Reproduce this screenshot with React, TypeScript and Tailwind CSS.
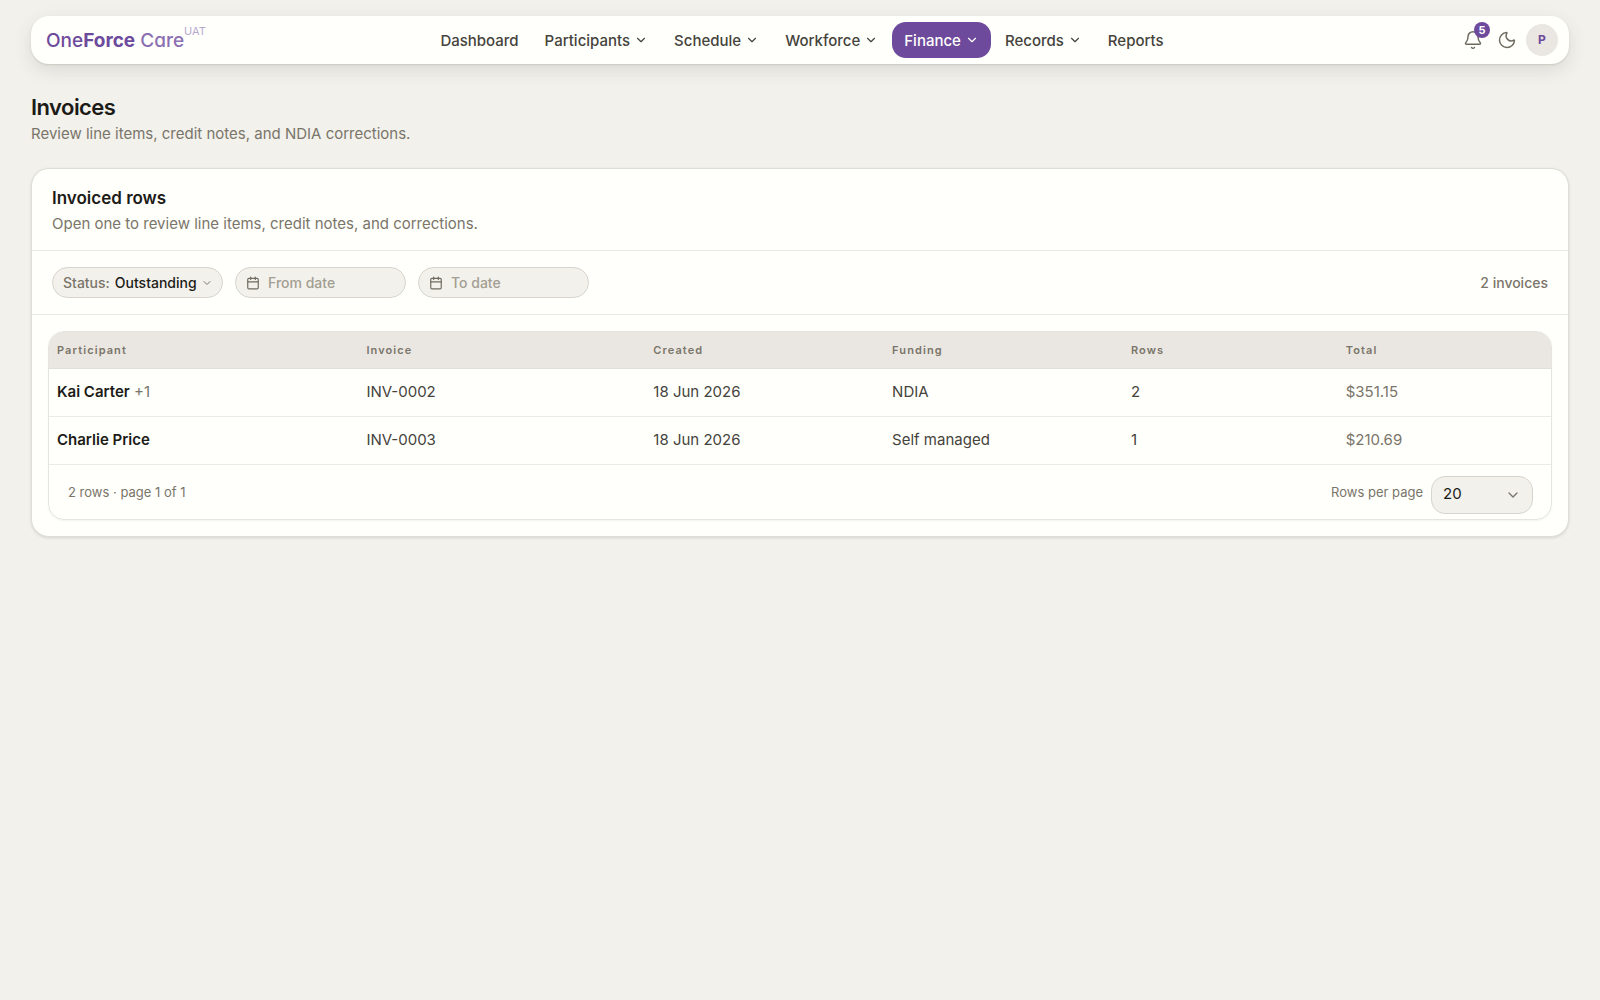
import { useState } from "react";
import { Bell, Calendar, ChevronDown, Moon } from "lucide-react";
import clsx from "clsx";

interface NavItem {
    label: string;
    hasMenu?: boolean;
    active?: boolean;
}

interface Invoice {
    id: string;
    participant: string;
    extra?: string;
    created: string;
    funding: string;
    rows: number;
    total: string;
}

const navItems: NavItem[] = [
    { label: "Dashboard" },
    { label: "Participants", hasMenu: true },
    { label: "Schedule", hasMenu: true },
    { label: "Workforce", hasMenu: true },
    { label: "Finance", hasMenu: true, active: true },
    { label: "Records", hasMenu: true },
    { label: "Reports" },
];

const columns = [
    { label: "Participant", width: "w-[20.6%]" },
    { label: "Invoice", width: "w-[19.1%]" },
    { label: "Created", width: "w-[15.9%]" },
    { label: "Funding", width: "w-[15.9%]" },
    { label: "Rows", width: "w-[14.3%]" },
    { label: "Total", width: "w-[14.2%]" },
];

const invoices: Invoice[] = [
    { id: "INV-0002", participant: "Kai Carter", extra: "+1", created: "18 Jun 2026", funding: "NDIA", rows: 2, total: "$351.15" },
    { id: "INV-0003", participant: "Charlie Price", created: "18 Jun 2026", funding: "Self managed", rows: 1, total: "$210.69" },
];

/* ── Top bar ──────────────────────────────────────────── */
function TopBar() {
    const itemClass = "flex h-9 items-center gap-1 rounded-[14px] px-3 pt-[2px] text-[15px] font-medium";

    return (
        <header className="grid grid-cols-[1fr_auto_1fr] items-center rounded-[18px] bg-[#fffffb] py-[6px] pr-[11px] pl-[15px] shadow-[0_1px_2px_rgba(60,55,40,0.14),0_6px_18px_rgba(60,55,40,0.12)]">
            <a href="#" className="flex items-start pt-[2px] text-[19px] leading-7 text-[#6d4a9c]">
                <span className="font-medium [font-feature-settings:'cv11'_1]">
                    One<span className="font-bold">Force</span> <span className="text-[#8b6fb3]">Care</span>
                </span>
                <span className="-mt-1 text-[11px] leading-4 text-[#b9a9d0]">UAT</span>
            </a>
            <nav className="flex items-center gap-[2px]">
                {navItems.map((item) =>
                    item.hasMenu ? (
                        <button
                            key={item.label}
                            type="button"
                            className={clsx(itemClass, item.active ? "bg-[#6d4a9c] text-[#fffffb]" : "text-[#45433c]")}
                        >
                            {item.label}
                            <ChevronDown size={14} className="mb-[2px]" />
                        </button>
                    ) : (
                        <a key={item.label} href="#" className={clsx(itemClass, "text-[#45433c]")}>
                            {item.label}
                        </a>
                    )
                )}
            </nav>
            <div className="flex items-center justify-end text-[#6f6b60]">
                <button type="button" aria-label="Notifications" className="relative flex h-9 w-[34px] items-center justify-center">
                    <Bell size={20} strokeWidth={1.75} />
                    <span className="absolute top-0 right-0 flex size-4 items-center justify-center rounded-full bg-[#6d4a9c] text-[11px] font-bold text-white">
                        5
                    </span>
                </button>
                <button type="button" aria-label="Dark mode" className="flex h-9 w-[34px] items-center justify-center">
                    <Moon size={20} strokeWidth={1.75} />
                </button>
                <button
                    type="button"
                    aria-label="Account"
                    className="ml-[2px] flex size-8 items-center justify-center rounded-full bg-[#eae7e2] text-xs font-bold text-[#6d4a9c]"
                >
                    P
                </button>
            </div>
        </header>
    );
}

/* ── Pill-shaped date box ─────────────────────────────── */
function DateField({ label }: { label: string }) {
    return (
        <label className="flex h-[31px] w-[171px] items-center gap-2 rounded-full border border-[#d6d4cc] bg-[#f2f1ec] px-[10px] text-[#6f6b60]">
            <Calendar size={14} className="shrink-0" />
            <input
                type="text"
                aria-label={label}
                placeholder={label}
                className="w-full min-w-0 bg-transparent font-medium outline-none placeholder:text-[#a39e92]"
            />
        </label>
    );
}

export default function App() {
    const [status, setStatus] = useState("Outstanding");
    const [pageSize, setPageSize] = useState("20");

    return (
        <div className="min-h-screen bg-[#f2f1ec] px-[31px] pt-4 font-['Inter',sans-serif] text-[#1c1b17]">
            <TopBar />

            <main className="pt-7">
                <h1 className="text-[22px] leading-[30px] font-semibold tracking-tight">Invoices</h1>
                <p className="text-[15px] leading-6 text-[#7a756a]">Review line items, credit notes, and NDIA corrections.</p>

                <section className="mt-[22px] rounded-[18px] border border-[#deddd6] bg-[#fffffb] shadow-[0_1px_3px_rgba(60,55,40,0.15)]">
                    <div className="border-b border-[#ebeae5] px-5 pt-4 pb-[13px]">
                        <h2 className="text-[17px] leading-[26px] font-semibold">Invoiced rows</h2>
                        <p className="text-[15px] leading-[26px] text-[#7a756a]">
                            Open one to review line items, credit notes, and corrections.
                        </p>
                    </div>

                    <div className="flex items-center gap-3 border-b border-[#ebeae5] px-5 py-4 text-sm font-medium">
                        <label className="relative flex h-[31px] w-[171px] items-center rounded-full border border-[#d6d4cc] bg-[#f2f1ec] pl-[10px] text-[#7a756a]">
                            Status:
                            <select
                                value={status}
                                onChange={(e) => setStatus(e.target.value)}
                                className="ml-[5px] min-w-0 flex-1 appearance-none bg-transparent text-[#1c1b17] outline-none"
                            >
                                <option>Outstanding</option>
                                <option>Paid</option>
                            </select>
                            <ChevronDown size={12} className="pointer-events-none absolute right-[9px]" />
                        </label>
                        <DateField label="From date" />
                        <DateField label="To date" />
                        <span className="ml-auto text-[#7a756a]">2 invoices</span>
                    </div>

                    <div className="p-4">
                        <div className="overflow-hidden rounded-2xl border border-[#e6e4de] shadow-[0_1px_2px_rgba(60,55,40,0.06)]">
                            <table className="w-full table-fixed text-left text-[15px]">
                                <thead className="bg-[#eae7e2] text-[11px] text-[#7a756a]">
                                    <tr className="h-9 border-b border-[#e1dfd9]">
                                        {columns.map((col) => (
                                            <th key={col.label} scope="col" className={clsx(col.width, "px-2 font-semibold tracking-widest")}>
                                                {col.label}
                                            </th>
                                        ))}
                                    </tr>
                                </thead>
                                <tbody className="text-[#45433c]">
                                    {invoices.map((inv) => (
                                        <tr key={inv.id} className="h-12 border-b border-[#ebeae5]">
                                            <td className="px-2">
                                                <span className="font-semibold text-[#1c1b17]">{inv.participant}</span>
                                                {inv.extra && <span className="text-[#7a756a]"> {inv.extra}</span>}
                                            </td>
                                            <td className="px-2">{inv.id}</td>
                                            <td className="px-2">{inv.created}</td>
                                            <td className="px-2">{inv.funding}</td>
                                            <td className="px-2">{inv.rows}</td>
                                            <td className="px-2 text-[#7a756a]">{inv.total}</td>
                                        </tr>
                                    ))}
                                </tbody>
                            </table>
                            <div className="flex items-start justify-between pt-[11px] pr-[18px] pb-[5px] pl-[19px] text-[13px] text-[#7a756a]">
                                <span className="leading-8">2 rows · page 1 of 1</span>
                                <div className="flex items-start gap-2">
                                    <label htmlFor="page-size" className="leading-8">
                                        Rows per page
                                    </label>
                                    <div className="relative flex items-center">
                                        <select
                                            id="page-size"
                                            value={pageSize}
                                            onChange={(e) => setPageSize(e.target.value)}
                                            className="h-[38px] w-[102px] appearance-none rounded-[14px] border border-[#d6d4cc] bg-[#f2f1ec] px-[11px] text-[15px] text-[#1c1b17] outline-none"
                                        >
                                            <option>20</option>
                                            <option>50</option>
                                        </select>
                                        <ChevronDown size={16} className="pointer-events-none absolute right-3" />
                                    </div>
                                </div>
                            </div>
                        </div>
                    </div>
                </section>
            </main>
        </div>
    );
}
